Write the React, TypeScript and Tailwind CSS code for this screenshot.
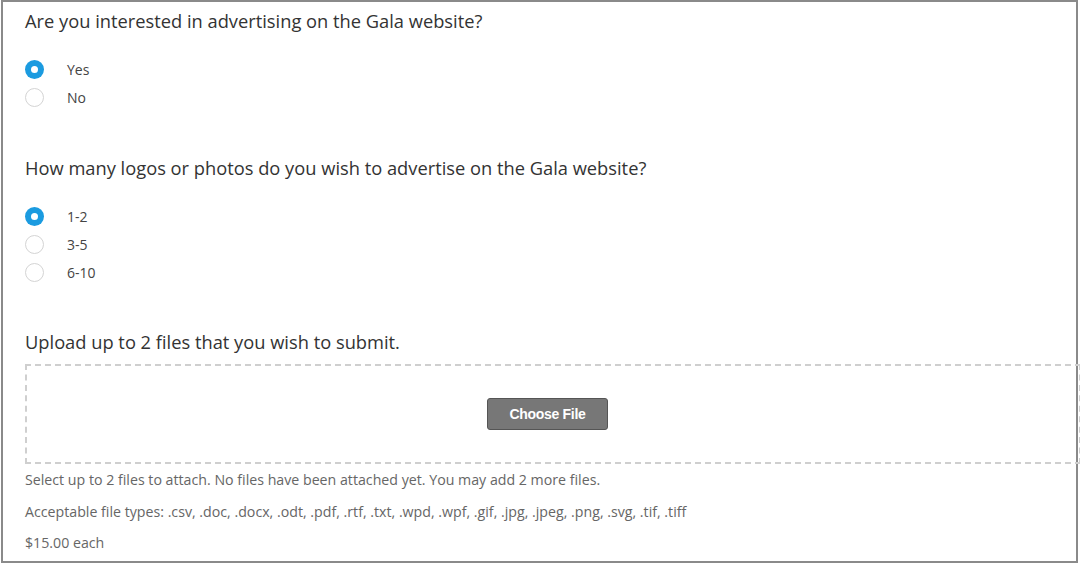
import React from "react";

const font = { fontFamily: '"Open Sans", "Liberation Sans", sans-serif' };

function Radio({ checked, label }: { checked?: boolean; label: string }) {
  return (
    <div className="flex items-center h-[28px]">
      <div className="w-[42px] flex">
        {checked ? (
          <span className="w-[19px] h-[19px] rounded-full bg-[#1b9be0] flex items-center justify-center">
            <span className="w-[7px] h-[7px] rounded-full bg-white" />
          </span>
        ) : (
          <span className="w-[19px] h-[19px] rounded-full border border-[#d4d4d4] bg-white" />
        )}
      </div>
      <span className="text-[14px] text-[#444]">{label}</span>
    </div>
  );
}

export default function App() {
  return (
    <div className="w-[1080px] h-[564px] bg-white overflow-hidden" style={font}>
      <div className="ml-[1px] w-[1077px] h-[563px] border-2 border-[#8a8a8a] pl-[22px] overflow-visible">
        <h2 className="text-[18.3px] text-[#333] font-normal pt-[7px] leading-[24px]">
          Are you interested in advertising on the Gala website?
        </h2>
        <div className="mt-[22px]">
          <Radio checked label="Yes" />
          <Radio label="No" />
        </div>
        <h2 className="text-[18.3px] text-[#333] font-normal mt-[45px] leading-[24px]">
          How many logos or photos do you wish to advertise on the Gala website?
        </h2>
        <div className="mt-[22px]">
          <Radio checked label="1-2" />
          <Radio label="3-5" />
          <Radio label="6-10" />
        </div>
        <h2 className="text-[18.3px] text-[#333] font-normal mt-[44px] leading-[24px]">
          Upload up to 2 files that you wish to submit.
        </h2>
        <div className="mt-[10px] w-[1056px] h-[100px] border-2 border-dashed border-[#cfcfcf] flex items-center pl-[460px]">
          <button
            className="w-[121px] h-[32px] bg-[#777] border border-[#555] rounded-[3px] text-white text-[14px] font-bold tracking-[-0.3px]"
            style={{ fontFamily: '"Liberation Sans", Arial, sans-serif' }}
          >
            Choose File
          </button>
        </div>
        <div className="text-[14.2px] text-[#666] leading-[16px]">
          <p className="mt-[8px]">
            Select up to 2 files to attach. No files have been attached yet. You may add 2 more files.
          </p>
          <p className="mt-[16px]">
            Acceptable file types: .csv, .doc, .docx, .odt, .pdf, .rtf, .txt, .wpd, .wpf, .gif, .jpg, .jpeg, .png, .svg, .tif, .tiff
          </p>
          <p className="mt-[15px]">$15.00 each</p>
        </div>
      </div>
    </div>
  );
}
